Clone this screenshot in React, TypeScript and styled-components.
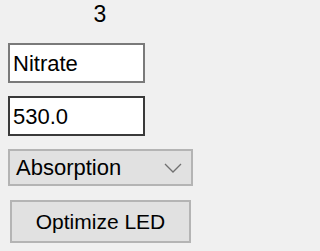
import React from "react";
import styled, { createGlobalStyle } from "styled-components";

const Global = createGlobalStyle`
  html, body { margin: 0; padding: 0; background: #f0f0f0; }
  body { font-family: "Liberation Sans", Arial, sans-serif; }
`;

const Panel = styled.div`
  width: 200px;
  height: 251px;
  box-sizing: border-box;
  padding-left: 8px;
  display: flex;
  flex-direction: column;
  align-items: flex-start;
  gap: 13px;
  background: #f0f0f0;
  color: #000;
  font-size: 22px;
`;

const IndexLabel = styled.div`
  width: 184px;
  height: 30px;
  line-height: 28px;
  text-align: center;
  font-size: 23px;
  color: #000;
`;

const TextBox = styled.input<{ $focused?: boolean }>`
  box-sizing: border-box;
  width: 137px;
  height: 40px;
  margin: 0;
  padding: 2px 0 0 3px;
  border: 2px solid ${(p) => (p.$focused ? "#3a3a3a" : "#7a7a7a")};
  border-radius: 0;
  background: #ffffff;
  font-family: "Liberation Sans", Arial, sans-serif;
  font-size: 22px;
  color: #000;
  outline: none;
`;

const Dropdown = styled.div`
  box-sizing: border-box;
  width: 185px;
  height: 37px;
  display: flex;
  align-items: center;
  justify-content: space-between;
  padding: 0 9px 0 6px;
  border: 2px solid #b4b4b4;
  background: #e1e1e1;
  font-size: 22px;
  color: #000;
`;

const Chevron = styled.svg`
  display: block;
  width: 18px;
  height: 10px;
`;

const Button = styled.button`
  box-sizing: border-box;
  margin: 1px 0 0 2px;
  width: 181px;
  height: 43px;
  padding: 0;
  border: 2px solid #b4b4b4;
  border-radius: 0;
  background: #e1e1e1;
  font-family: "Liberation Sans", Arial, sans-serif;
  font-size: 21px;
  color: #000;
`;

export default function App() {
  return (
    <>
      <Global />
      <Panel>
        <IndexLabel>3</IndexLabel>
        <TextBox defaultValue="Nitrate" readOnly />
        <TextBox $focused defaultValue="530.0" readOnly />
        <Dropdown>
          <span>Absorption</span>
          <Chevron viewBox="0 0 18 10">
            <path d="M1 1 L9 9 L17 1" fill="none" stroke="#707070" strokeWidth="1.3" />
          </Chevron>
        </Dropdown>
        <Button>Optimize LED</Button>
      </Panel>
    </>
  );
}
